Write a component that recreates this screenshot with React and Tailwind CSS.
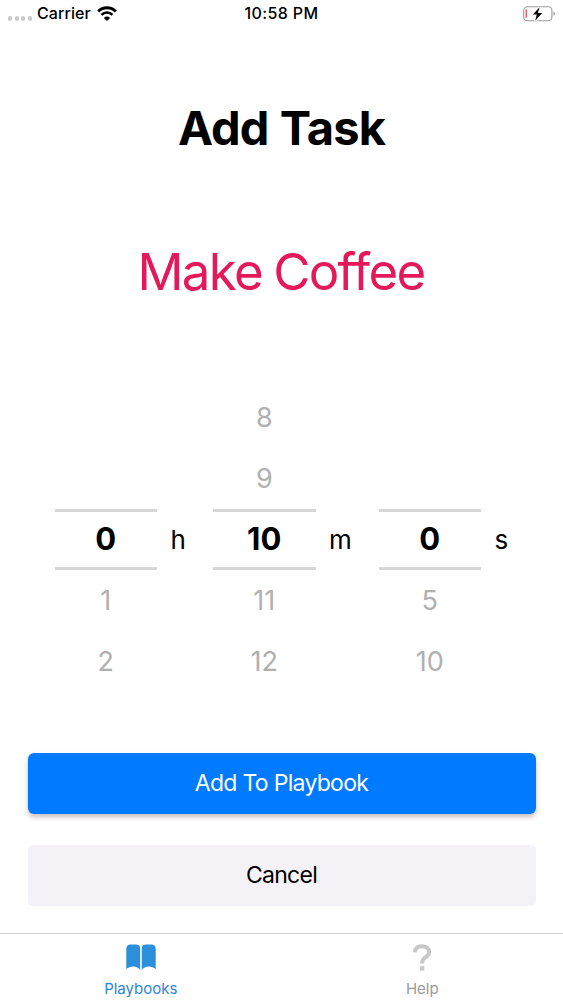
const COLUMNS = [
  { unit: 'h', values: ['', '', '0', '1', '2'], gap: 'w-[56px]' },
  { unit: 'm', values: ['8', '9', '10', '11', '12'], gap: 'w-[63px]' },
  { unit: 's', values: ['', '', '0', '5', '10'], gap: 'w-[28px]' },
];

function WifiIcon() {
  return (
    <svg viewBox="0 0 20 15" className="-mt-px h-[15px] w-5" fill="none">
      <path d="M1.2 5.4a12.4 12.4 0 0 1 17.6 0" stroke="black" strokeWidth="2.8" />
      <path d="M4.5 8.8a7.8 7.8 0 0 1 11 0" stroke="black" strokeWidth="2.6" />
      <path d="M10 14.9 6.9 11.9a4.3 4.3 0 0 1 6.2 0Z" fill="black" />
    </svg>
  );
}

function BatteryIcon() {
  return (
    <svg viewBox="0 0 34 18" className="h-[18px] w-[34px]" fill="none">
      <rect x="1.7" y="1.7" width="28.2" height="14" rx="3.8" stroke="#9a9a9a" strokeWidth="1.1" />
      <path d="M31.5 6.4c1.7.5 1.7 3.9 0 4.4Z" fill="#888" />
      <path d="M4.3 4.4v8.4" stroke="#e5606a" strokeWidth="1.5" />
      <path d="M17.6 2.2 10.8 9.6h4L13.2 15.8 20.2 7.9h-4.3Z" fill="black" stroke="white" strokeWidth="2.4" paintOrder="stroke" />
    </svg>
  );
}

function BookIcon() {
  return (
    <svg viewBox="0 0 30 27" className="h-[27px] w-[30px]" fill="#2c8fdc">
      <path d="M.3 4.8Q.3.7 4.6.5h5.2q4.4 0 4.4 4.2V26.2C11.8 21.7 4.3 21.2.3 25.2Z" />
      <path d="M15.8 4.7Q15.8.5 20.2.5h5.2q4.3.2 4.3 4.3v20.4c-4-4-11.5-3.5-13.9 1Z" />
    </svg>
  );
}

function QuestionIcon() {
  return (
    <svg viewBox="0 0 20 27" className="h-[27px] w-5" fill="none" stroke="#c8c8c8">
      <path d="M2.7 8.4C2.9 4.6 5.6 2.2 9.9 2.2c4.4 0 7.2 2.2 7.2 5.7 0 2.6-1.3 3.9-3.6 5.3-2.4 1.5-3.3 2.8-3.3 5.5v.8" strokeWidth="4" />
      <path d="M10.1 22.2v4.4" strokeWidth="4.4" />
    </svg>
  );
}

function StatusBar() {
  return (
    <div className="grid h-7 shrink-0 grid-cols-3 items-center text-[16px]">
      <div className="flex items-center pl-2">
        <div className="mr-[5px] mt-[9px] flex gap-[2.4px]">
          {[0, 1, 2, 3].map((dot) => (
            <span key={dot} className="size-[4.2px] rounded-full bg-[#c9c9c9]" />
          ))}
        </div>
        <span className="mr-[6px] -mt-[2px] font-medium tracking-[0.1px]">Carrier</span>
        <WifiIcon />
      </div>
      <span className="-mt-[2px] text-center font-medium tracking-[0.4px]">10:58 PM</span>
      <div className="flex justify-end pr-[7px]">
        <BatteryIcon />
      </div>
    </div>
  );
}

function PickerColumn({ unit, values, gap }) {
  return (
    <>
      <div className="flex w-[102.5px] flex-col">
        {values.map((value, i) => (
          <div
            key={i}
            className={
              i === 2
                ? 'flex h-[61px] items-center justify-center border-y-3 border-[#d6d6d6] text-[31px] font-bold'
                : 'flex h-[61px] items-center justify-center pt-[2px] text-[27px] text-[#b0b0b0]'
            }
          >
            {value}
          </div>
        ))}
      </div>
      <div className={`flex items-center pl-[13.5px] text-[26px] ${gap}`}>{unit}</div>
    </>
  );
}

export default function App() {
  return (
    <div className="flex h-[1000px] w-[563px] flex-col overflow-hidden bg-white font-[Inter,'Liberation_Sans',sans-serif] text-black">
      <StatusBar />

      <main className="flex flex-1 flex-col">
        <h1 className="mt-[70px] text-center text-[47px] leading-[60px] font-bold tracking-[-0.9px] [word-spacing:1px]">Add Task</h1>
        <p className="mt-[82px] pr-px text-center text-[51px] leading-[64px] tracking-[-1.7px] text-[#e4195a] [word-spacing:-1.5px]">
          Make Coffee
        </p>

        <div className="mt-[83px] flex pl-[54.5px]">
          {COLUMNS.map((column) => (
            <PickerColumn key={column.unit} {...column} />
          ))}
        </div>

        <div className="mt-[60.5px] flex flex-col gap-[31.5px] px-[27.5px] text-[23px]">
          <button className="h-[61px] rounded-[6px] bg-[#007aff] tracking-[-0.7px] text-white shadow-[0_3px_5px_rgba(60,20,30,0.28)]">
            Add To Playbook
          </button>
          <button className="h-[61px] rounded-[5px] bg-[#f4f2f6] tracking-[-0.7px]">Cancel</button>
        </div>
      </main>

      <nav className="grid h-[67px] shrink-0 grid-cols-2 border-t border-[#cfcfcf] text-[15px]">
        <a className="flex flex-col items-center pt-[10px] text-[#2c86dc]">
          <BookIcon />
          <span className="mt-[8px] leading-[20px]">Playbooks</span>
        </a>
        <a className="flex flex-col items-center pt-[10px] text-[#999]">
          <QuestionIcon />
          <span className="mt-[8px] leading-[20px]">Help</span>
        </a>
      </nav>
    </div>
  );
}
